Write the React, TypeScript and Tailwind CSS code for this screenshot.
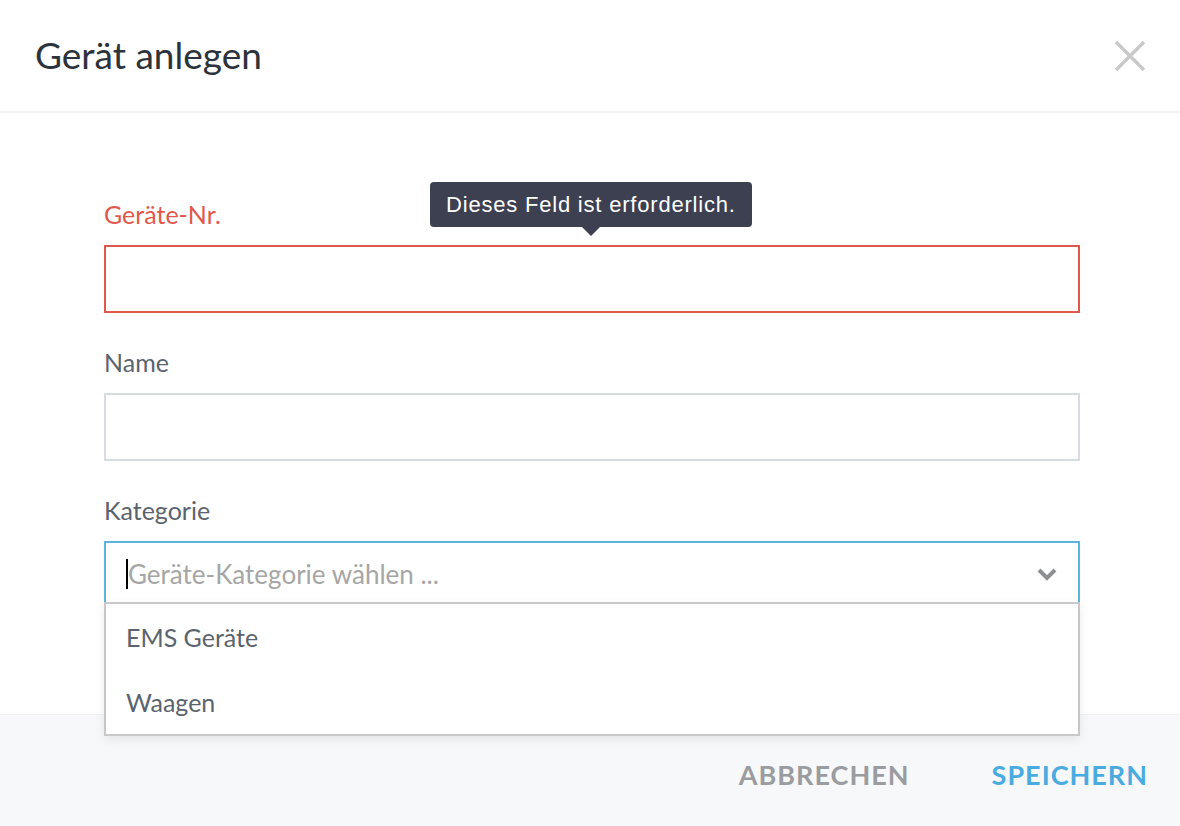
import React from "react";

export default function App() {
  const font = { fontFamily: "Lato, 'Open Sans', sans-serif" };
  return (
    <div className="w-[1180px] h-[826px] bg-white flex flex-col overflow-hidden" style={font}>
      <div className="h-[113px] shrink-0 border-b-[2px] border-[#f1f2f3] flex items-center justify-between pl-[35px] pr-[34px]">
        <h1 className="text-[37px] text-[#2c333b] leading-none pb-[2px]">Gerät anlegen</h1>
        <svg width="32" height="32" viewBox="0 0 32 32">
          <path d="M2 2 L30 30 M30 2 L2 30" stroke="#c9c9c9" strokeWidth="3.5" />
        </svg>
      </div>

      <div className="flex-1 pl-[104px] pr-[100px] pt-[85px] relative">
        <div className="relative">
          <label className="block text-[25px] text-[#e2574c] leading-[30px] mb-[16px] pt-[1px]">Geräte-Nr.</label>
          <div className="h-[68px] border-2 border-[#e2574c] bg-white" />
          <div className="absolute left-[326px] top-[-16px] flex flex-col items-center">
            <div
              className="bg-[#3d4051] text-white text-[22px] tracking-[0.8px] rounded-[4px] px-[16px] h-[45px] flex items-center whitespace-nowrap"
              style={{ fontFamily: "'Liberation Sans', Arial, sans-serif" }}
            >
              Dieses Feld ist erforderlich.
            </div>
            <div className="w-0 h-0 border-l-[9px] border-r-[9px] border-t-[9px] border-l-transparent border-r-transparent border-t-[#3d4051]" />
          </div>
        </div>

        <label className="block text-[25px] text-[#5b646d] leading-[30px] mt-[34px] mb-[16px]">Name</label>
        <div className="h-[68px] border-2 border-[#d5dde0] bg-white" />

        <label className="block text-[25px] text-[#5b646d] leading-[30px] mt-[34px] mb-[16px]">Kategorie</label>
        <div className="relative">
          <div className="h-[63px] border-2 border-b-0 border-[#5ab4e0] bg-white flex items-center pl-[20px] pr-[20px]">
            <span className="w-[2px] h-[30px] bg-black" />
            <span className="text-[26px] text-[#a6a6a6] leading-none">Geräte-Kategorie wählen ...</span>
            <svg width="22" height="14" viewBox="0 0 22 14" className="ml-auto">
              <path d="M3 3 L11 11 L19 3" stroke="#8d8f93" strokeWidth="4" fill="none" />
            </svg>
          </div>
          <div className="absolute left-0 right-0 top-[61px] z-10 bg-white border-2 border-[#c8c8c8] shadow-[0_4px_10px_rgba(0,0,0,0.08)]">
            <div className="h-[65px] flex items-center pl-[20px] pt-[2px] text-[25px] text-[#5b646d]">EMS Geräte</div>
            <div className="h-[65px] flex items-center pl-[20px] pt-[2px] text-[25px] text-[#5b646d]">Waagen</div>
          </div>
        </div>
      </div>

      <div className="h-[112px] shrink-0 bg-[#f7f8fa] border-t border-[#eff0f2] flex items-center justify-end pr-[32px] pt-[10px] gap-[82px]">
        <button className="text-[27px] font-bold tracking-[1px] text-[#9a9ca0]">ABBRECHEN</button>
        <button className="text-[27px] font-bold tracking-[1px] text-[#4aabe0]">SPEICHERN</button>
      </div>
    </div>
  );
}
